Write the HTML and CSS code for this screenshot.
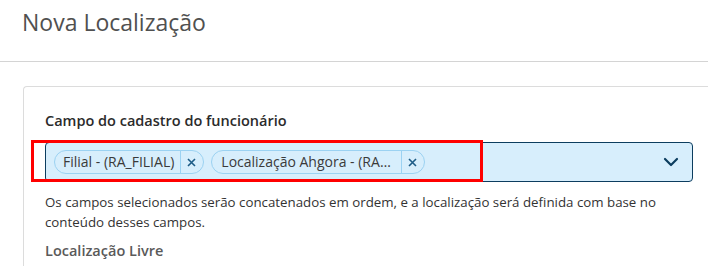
FILE: index.html
```html
<!DOCTYPE html>
<html lang="pt-BR">

<head>
    <meta charset="UTF-8">
    <meta name="viewport" content="width=device-width, initial-scale=1.0">
    <title>Nova Localização</title>
    <link rel="stylesheet" href="styles.css">
</head>

<body>
    <header class="page-header">
        <h1 class="page-title">Nova Localização</h1>
    </header>

    <main class="page-content">
        <section class="card">
            <label class="field-label">Campo do cadastro do funcionário</label>
            <div class="multiselect-wrap">
                <div class="multiselect">
                    <div class="chips">
                        <span class="chip">
                            <span class="chip-text">Filial - (RA_FILIAL)</span>
                            <span class="chip-close">
                                <svg width="9" height="9" viewBox="0 0 9 9"><path d="M1 1 L8 8 M8 1 L1 8" stroke="#1d5c86" stroke-width="1.6" /></svg>
                            </span>
                        </span>
                        <span class="chip">
                            <span class="chip-text chip-text-long">Localização Ahgora - (RA_LOCALIZACAO)</span>
                            <span class="chip-close">
                                <svg width="9" height="9" viewBox="0 0 9 9"><path d="M1 1 L8 8 M8 1 L1 8" stroke="#1d5c86" stroke-width="1.6" /></svg>
                            </span>
                        </span>
                    </div>
                    <svg class="chevron" width="16" height="10" viewBox="0 0 16 10">
                        <path d="M2 2 L8 8 L14 2" fill="none" stroke="#0c3d5f" stroke-width="2.2" stroke-linecap="round" stroke-linejoin="round" />
                    </svg>
                </div>
                <div class="highlight"></div>
            </div>
            <p class="field-help">Os campos selecionados serão concatenados em ordem, e a localização será definida com base no conteúdo desses campos.</p>
            <h2 class="section-label">Localização Livre</h2>
        </section>
    </main>
</body>

</html>
```

FILE: styles.css
```css
:root {
    --text: #2b2b2b;
    --line: #d4d4d4;
    --input-bg: #d7eefc;
    --input-border: #0c3d5f;
    --chip-border: #9bd2f2;
}

* {
    margin: 0;
    padding: 0;
    box-sizing: border-box;
    font-family: 'Open Sans', 'Noto Sans', sans-serif;
}

body {
    background-color: #fff;
    color: var(--text);
    width: 708px;
    height: 266px;
    overflow: hidden;
}

.page-header {
    height: 62px;
    border-bottom: 1px solid var(--line);
    padding: 6px 0 0 22px;
}

.page-title {
    font-size: 23px;
    font-weight: 400;
    color: #505050;
    line-height: 32px;
}

.page-content {
    padding: 24px 0 0 23px;
}

.card {
    width: 720px;
    border: 1px solid #dcdcdc;
    border-right: none;
    border-bottom: none;
    border-radius: 4px 0 0 0;
    padding: 24px 0 0 21px;
    height: 180px;
}

.field-label {
    display: block;
    font-size: 14.5px;
    font-weight: 600;
    color: var(--text);
    line-height: 20px;
}

.multiselect-wrap {
    position: relative;
    margin-top: 11px;
    width: 648px;
}

.multiselect {
    height: 40px;
    background-color: var(--input-bg);
    border: 1px solid var(--input-border);
    border-radius: 4px;
    display: flex;
    align-items: center;
    justify-content: space-between;
    padding: 0 13px 0 8px;
}

.chips {
    display: flex;
    gap: 7px;
}

.chip {
    display: flex;
    align-items: center;
    height: 24px;
    border: 1px solid var(--chip-border);
    border-radius: 12px;
    font-size: 14px;
    color: #3a3a3a;
}

.chip-text {
    padding: 0 6px 0 8px;
    line-height: 22px;
    border-right: 1px solid var(--chip-border);
    white-space: nowrap;
}

.chip-text-long {
    padding-left: 9px;
    max-width: 190px;
    overflow: hidden;
    text-overflow: ellipsis;
}

.chip-close {
    width: 22px;
    height: 22px;
    display: flex;
    align-items: center;
    justify-content: center;
    padding-right: 2px;
}

.highlight {
    position: absolute;
    left: -14px;
    top: -2px;
    width: 452px;
    height: 42px;
    border: 3px solid #f00;
    pointer-events: none;
}

.field-help {
    margin-top: 10px;
    font-size: 13.3px;
    line-height: 20px;
    color: #333;
    width: 620px;
}

.section-label {
    margin-top: 9px;
    font-size: 14.5px;
    font-weight: 600;
    color: #5a5a5a;
    line-height: 20px;
}
```
